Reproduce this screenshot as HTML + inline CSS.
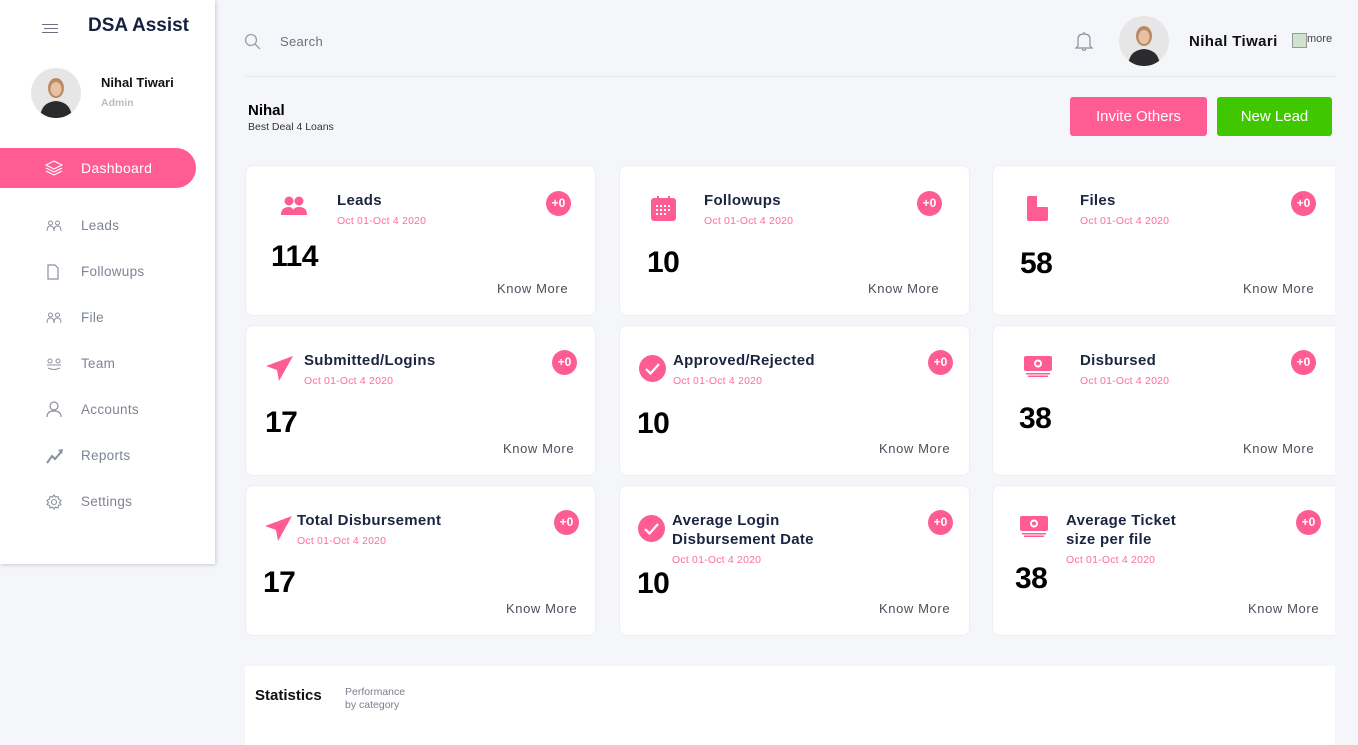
<!DOCTYPE html>
<html><head><meta charset="utf-8"><style>
*{margin:0;padding:0;box-sizing:border-box}
body{width:1358px;height:745px;overflow:hidden;background:#f5f6f9;font-family:"Liberation Sans",sans-serif;position:relative}
.a{position:absolute;white-space:nowrap}
.side{position:absolute;left:0;top:0;width:215px;height:564px;background:#fff;box-shadow:1px 1px 4px rgba(0,0,0,.18)}
.nav{position:absolute;left:81px;font-size:13.5px;color:#7d8495;letter-spacing:.3px}
.ni{position:absolute;left:46px}
.card{position:absolute;background:#fff;border-radius:8px;border:1px solid #eceef2;width:351px;height:151px}
.t{font-weight:bold;font-size:15px;color:#1b2541;line-height:19px;letter-spacing:.3px}
.d{font-size:10.5px;color:#ff6d9b;letter-spacing:.2px}
.n{font-weight:bold;font-size:30px;color:#000;letter-spacing:-0.5px}
.k{font-size:13px;color:#4a4f5c;letter-spacing:.6px}
.b{position:absolute;width:25px;height:25px;border-radius:50%;background:#ff5c93;color:#fff;font-weight:bold;font-size:12px;text-align:center;line-height:25px}
.av{position:absolute;border-radius:50%;background:#e6e6e6;overflow:hidden}
</style></head><body>

<div class="side">
  <div class="a" style="left:42px;top:22px;width:16px"><div style="height:1px;background:#6b7180;margin-top:2px"></div><div style="height:1px;background:#6b7180;margin-top:3px;margin-left:2px"></div><div style="height:1px;background:#6b7180;margin-top:3px"></div></div>
  <div class="a" style="left:88px;top:15px;font-size:19px;font-weight:bold;color:#15213f">DSA Assist</div>
  <div class="av" style="left:31px;top:68px;width:50px;height:50px">
    <svg width="50" height="50"><ellipse cx="25" cy="20" rx="8" ry="10" fill="#b98a64"/><ellipse cx="25" cy="21" rx="5.5" ry="7" fill="#e8c0a6"/><path d="M9 50 Q10 34 25 33 Q40 34 41 50Z" fill="#2b2b2e"/></svg>
  </div>
  <div class="a" style="left:101px;top:75px;font-size:13px;font-weight:bold;color:#111">Nihal Tiwari</div>
  <div class="a" style="left:101px;top:97px;font-size:10.5px;font-weight:bold;color:#b8bcc6">Admin</div>
  <div class="a" style="left:0;top:148px;width:196px;height:40px;background:#ff5c93;border-radius:0 20px 20px 0"></div>
  <svg class="a" style="left:45px;top:160px" width="18" height="16" viewBox="0 0 18 16" fill="none" stroke="#fff" stroke-width="1.2"><path d="M9 1 L17 5 L9 9 L1 5Z M1 8 L9 12 L17 8 M1 11 L9 15 L17 11"/></svg>
  <div class="a" style="left:81px;top:160px;font-size:14px;color:#fff;letter-spacing:.3px">Dashboard</div>

  <svg class="ni" style="top:220px" width="16" height="12" viewBox="0 0 16 12" fill="none" stroke="#8a90a0" stroke-width="1"><circle cx="4.5" cy="3" r="2"/><circle cx="11.5" cy="3" r="2"/><path d="M1 11 Q1 6 4.5 6 Q8 6 8 11 M8 11 Q8 6 11.5 6 Q15 6 15 11"/></svg>
  <div class="nav" style="top:218px">Leads</div>
  <svg class="ni" style="top:264px" width="14" height="16" viewBox="0 0 14 16" fill="none" stroke="#8a90a0" stroke-width="1.2"><path d="M2 1 H9 L12 4 V15 H2Z"/></svg>
  <div class="nav" style="top:264px">Followups</div>
  <svg class="ni" style="top:312px" width="16" height="12" viewBox="0 0 16 12" fill="none" stroke="#8a90a0" stroke-width="1"><circle cx="4.5" cy="3" r="2"/><circle cx="11.5" cy="3" r="2"/><path d="M1 11 Q1 6 4.5 6 Q8 6 8 11 M8 11 Q8 6 11.5 6 Q15 6 15 11"/></svg>
  <div class="nav" style="top:310px">File</div>
  <svg class="ni" style="top:358px" width="16" height="12" viewBox="0 0 16 12" fill="none" stroke="#8a90a0" stroke-width="1"><circle cx="4" cy="3" r="2"/><circle cx="12" cy="3" r="2"/><path d="M1 7 H15 M2 10 Q8 13 14 10"/></svg>
  <div class="nav" style="top:356px">Team</div>
  <svg class="ni" style="top:401px" width="16" height="17" viewBox="0 0 16 17" fill="none" stroke="#8a90a0" stroke-width="1.2"><circle cx="8" cy="5" r="4"/><path d="M1 16 Q1 10 8 10 Q15 10 15 16"/></svg>
  <div class="nav" style="top:402px">Accounts</div>
  <svg class="ni" style="top:448px" width="18" height="16" viewBox="0 0 18 16"><path d="M1 15 L6 8 L9 11 L15 4" stroke="#8a90a0" stroke-width="2" fill="none"/><path d="M12 2 L17 1 L16 6Z" fill="#8a90a0"/></svg>
  <div class="nav" style="top:448px">Reports</div>
  <svg class="ni" style="top:494px" width="16" height="16" viewBox="0 0 16 16" fill="none" stroke="#8a90a0" stroke-width="1.1"><circle cx="8" cy="8" r="2.5"/><path d="M8 1 L9.5 3 L12 2.5 L12.5 5 L15 6.5 L13.5 8.5 L15 10.5 L12.5 11.5 L12 14 L9.5 13 L8 15 L6.5 13 L4 14 L3.5 11.5 L1 10.5 L2.5 8.5 L1 6.5 L3.5 5 L4 2.5 L6.5 3Z"/></svg>
  <div class="nav" style="top:494px">Settings</div>
</div>

<svg class="a" style="left:244px;top:33px" width="17" height="17" viewBox="0 0 17 17" fill="none" stroke="#9aa0ad" stroke-width="1.3"><circle cx="7" cy="7" r="5.5"/><path d="M11 11 L16 16"/></svg>
<div class="a" style="left:280px;top:34px;font-size:13px;color:#6b7080;letter-spacing:.3px">Search</div>
<svg class="a" style="left:1075px;top:30px" width="18" height="22" viewBox="0 0 18 22" fill="none" stroke="#8a90a0" stroke-width="1.2"><path d="M9 2 V3.5 M3 16 V9 Q3 4 9 4 Q15 4 15 9 V16 L17 18 H1Z M7 19 Q9 22 11 19"/></svg>
<div class="av" style="left:1119px;top:16px;width:50px;height:50px"><svg width="50" height="50"><ellipse cx="25" cy="20" rx="8" ry="10" fill="#b98a64"/><ellipse cx="25" cy="21" rx="5.5" ry="7" fill="#e8c0a6"/><path d="M9 50 Q10 34 25 33 Q40 34 41 50Z" fill="#2b2b2e"/></svg></div>
<div class="a" style="left:1189px;top:33px;font-size:15px;font-weight:bold;color:#111;letter-spacing:.4px">Nihal Tiwari</div>
<div class="a" style="left:1292px;top:33px;width:15px;height:15px;border:1px solid #999;background:#cfe3d0"></div>
<div class="a" style="left:1307px;top:33px;font-size:11px;color:#444">more</div>
<div class="a" style="left:245px;top:76px;width:1090px;height:1px;background:#e4e6eb"></div>

<div class="a" style="left:248px;top:102px;font-size:15px;font-weight:bold;color:#000">Nihal</div>
<div class="a" style="left:248px;top:121px;font-size:10.5px;color:#333">Best Deal 4 Loans</div>
<div class="a" style="left:1070px;top:97px;width:137px;height:39px;background:#ff5c93;border-radius:3px;color:#fff;font-size:15px;text-align:center;line-height:39px">Invite Others</div>
<div class="a" style="left:1217px;top:97px;width:115px;height:39px;background:#3fc700;border-radius:3px;color:#fff;font-size:15px;text-align:center;line-height:39px">New Lead</div>

<div class="card" style="left:245px;top:165px"></div>
<div class="card" style="left:619px;top:165px"></div>
<div class="card" style="left:992px;top:165px;width:360px"></div>
<div class="card" style="left:245px;top:325px"></div>
<div class="card" style="left:619px;top:325px"></div>
<div class="card" style="left:992px;top:325px;width:360px"></div>
<div class="card" style="left:245px;top:485px"></div>
<div class="card" style="left:619px;top:485px"></div>
<div class="card" style="left:992px;top:485px;width:360px"></div>
<div class="a" style="left:1335px;top:0;width:23px;height:745px;background:#f5f6f9"></div>

<svg class="a" style="left:281px;top:196px" width="26" height="20" viewBox="0 0 26 20" fill="#ff5c93"><circle cx="8" cy="5" r="4.5"/><circle cx="18" cy="5" r="4.5"/><path d="M0 19 Q0 11 8 11 Q13 11 13 19Z M11 19 Q11 11 18 11 Q26 11 26 19Z"/></svg>
<div class="a t" style="left:337px;top:191px">Leads</div>
<div class="a d" style="left:337px;top:215px">Oct 01-Oct 4 2020</div>
<div class="b" style="left:546px;top:191px">+0</div>
<div class="a n" style="left:271px;top:240px">114</div>
<div class="a k" style="left:497px;top:281px">Know More</div>

<svg class="a" style="left:651px;top:196px" width="25" height="25" viewBox="0 0 25 25" fill="#ff5c93"><rect x="6" y="0" width="2" height="4"/><rect x="17" y="0" width="2" height="4"/><rect x="0" y="2" width="25" height="23" rx="3"/><g fill="#fff"><rect x="5" y="9" width="2" height="2"/><rect x="9" y="9" width="2" height="2"/><rect x="13" y="9" width="2" height="2"/><rect x="17" y="9" width="2" height="2"/><rect x="5" y="13" width="2" height="2"/><rect x="9" y="13" width="2" height="2"/><rect x="13" y="13" width="2" height="2"/><rect x="17" y="13" width="2" height="2"/><rect x="5" y="17" width="2" height="2"/><rect x="9" y="17" width="2" height="2"/><rect x="13" y="17" width="2" height="2"/></g></svg>
<div class="a t" style="left:704px;top:191px">Followups</div>
<div class="a d" style="left:704px;top:215px">Oct 01-Oct 4 2020</div>
<div class="b" style="left:917px;top:191px">+0</div>
<div class="a n" style="left:647px;top:246px">10</div>
<div class="a k" style="left:868px;top:281px">Know More</div>

<svg class="a" style="left:1027px;top:196px" width="22" height="25" viewBox="0 0 22 25" fill="#ff5c93"><path d="M2 0 H10 V11 H20 Q21 11 21 12 V23 Q21 25 19 25 H2 Q0 25 0 23 V2 Q0 0 2 0Z"/></svg>
<div class="a t" style="left:1080px;top:191px">Files</div>
<div class="a d" style="left:1080px;top:215px">Oct 01-Oct 4 2020</div>
<div class="b" style="left:1291px;top:191px">+0</div>
<div class="a n" style="left:1020px;top:247px">58</div>
<div class="a k" style="left:1243px;top:281px">Know More</div>

<svg class="a" style="left:266px;top:356px" width="27" height="25" viewBox="0 0 27 25" fill="#ff5c93"><path d="M0 10 L27 0 L13 25 L11 14Z"/></svg>
<div class="a t" style="left:304px;top:351px">Submitted/Logins</div>
<div class="a d" style="left:304px;top:375px">Oct 01-Oct 4 2020</div>
<div class="b" style="left:552px;top:350px">+0</div>
<div class="a n" style="left:265px;top:406px">17</div>
<div class="a k" style="left:503px;top:441px">Know More</div>

<svg class="a" style="left:639px;top:355px" width="27" height="27" viewBox="0 0 27 27"><circle cx="13.5" cy="13.5" r="13.5" fill="#ff5c93"/><path d="M7 14 L11.5 18.5 L20 9" stroke="#fff" stroke-width="2.2" fill="none"/></svg>
<div class="a t" style="left:673px;top:351px">Approved/Rejected</div>
<div class="a d" style="left:673px;top:375px">Oct 01-Oct 4 2020</div>
<div class="b" style="left:928px;top:350px">+0</div>
<div class="a n" style="left:637px;top:407px">10</div>
<div class="a k" style="left:879px;top:441px">Know More</div>

<svg class="a" style="left:1024px;top:356px" width="28" height="21" viewBox="0 0 28 21" fill="#ff5c93"><rect x="0" y="0" width="28" height="15" rx="2"/><circle cx="14" cy="7.5" r="4" fill="#fff"/><circle cx="14" cy="7.5" r="2" fill="#ff5c93"/><rect x="2" y="17" width="24" height="1.5"/><rect x="4" y="19.5" width="20" height="1.5"/></svg>
<div class="a t" style="left:1080px;top:351px">Disbursed</div>
<div class="a d" style="left:1080px;top:375px">Oct 01-Oct 4 2020</div>
<div class="b" style="left:1291px;top:350px">+0</div>
<div class="a n" style="left:1019px;top:402px">38</div>
<div class="a k" style="left:1243px;top:441px">Know More</div>

<svg class="a" style="left:265px;top:516px" width="27" height="25" viewBox="0 0 27 25" fill="#ff5c93"><path d="M0 10 L27 0 L13 25 L11 14Z"/></svg>
<div class="a t" style="left:297px;top:511px">Total Disbursement</div>
<div class="a d" style="left:297px;top:535px">Oct 01-Oct 4 2020</div>
<div class="b" style="left:554px;top:510px">+0</div>
<div class="a n" style="left:263px;top:566px">17</div>
<div class="a k" style="left:506px;top:601px">Know More</div>

<svg class="a" style="left:638px;top:515px" width="27" height="27" viewBox="0 0 27 27"><circle cx="13.5" cy="13.5" r="13.5" fill="#ff5c93"/><path d="M7 14 L11.5 18.5 L20 9" stroke="#fff" stroke-width="2.2" fill="none"/></svg>
<div class="a t" style="left:672px;top:511px">Average Login<br>Disbursement Date</div>
<div class="a d" style="left:672px;top:554px">Oct 01-Oct 4 2020</div>
<div class="b" style="left:928px;top:510px">+0</div>
<div class="a n" style="left:637px;top:567px">10</div>
<div class="a k" style="left:879px;top:601px">Know More</div>

<svg class="a" style="left:1020px;top:516px" width="28" height="21" viewBox="0 0 28 21" fill="#ff5c93"><rect x="0" y="0" width="28" height="15" rx="2"/><circle cx="14" cy="7.5" r="4" fill="#fff"/><circle cx="14" cy="7.5" r="2" fill="#ff5c93"/><rect x="2" y="17" width="24" height="1.5"/><rect x="4" y="19.5" width="20" height="1.5"/></svg>
<div class="a t" style="left:1066px;top:511px">Average Ticket<br>size per file</div>
<div class="a d" style="left:1066px;top:554px">Oct 01-Oct 4 2020</div>
<div class="b" style="left:1296px;top:510px">+0</div>
<div class="a n" style="left:1015px;top:562px">38</div>
<div class="a k" style="left:1248px;top:601px">Know More</div>

<div class="a" style="left:245px;top:666px;width:1090px;height:79px;background:#fff"></div>
<div class="a" style="left:255px;top:687px;font-size:15px;font-weight:bold;color:#111">Statistics</div>
<div class="a" style="left:345px;top:686px;font-size:10.5px;color:#7a7f8c;line-height:13px">Performance<br>by category</div>
</body></html>
